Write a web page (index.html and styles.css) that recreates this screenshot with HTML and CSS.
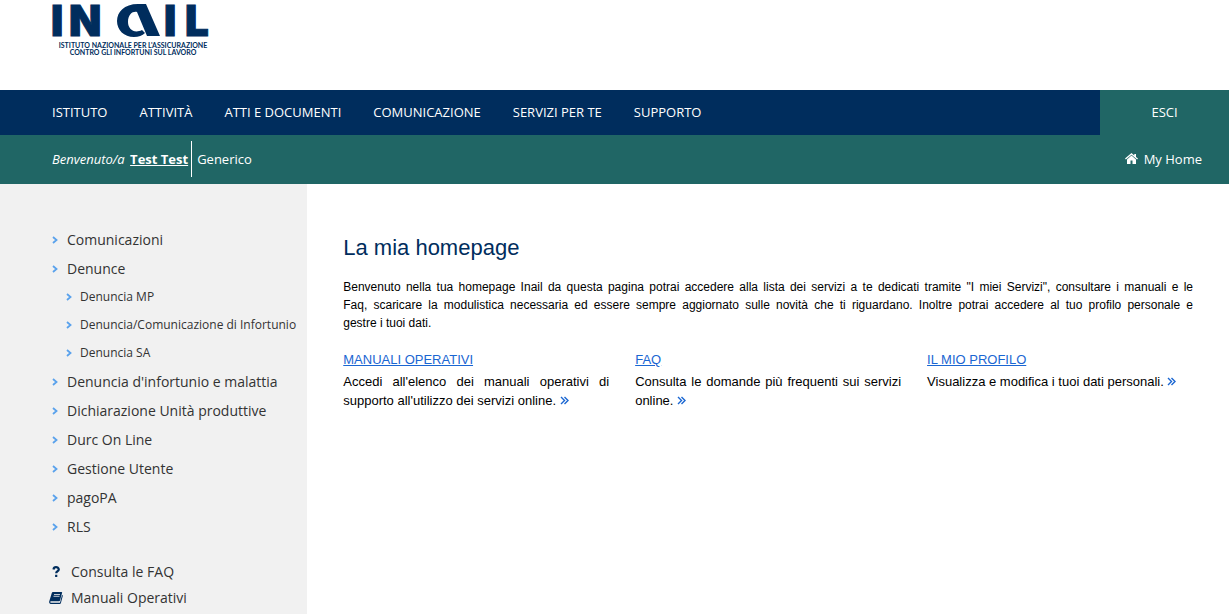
FILE: index.html
```
<!DOCTYPE html>
<html lang="it">
<head>
<meta charset="utf-8">
<meta name="viewport" content="width=device-width, initial-scale=1">
<title>INAIL - La mia homepage</title>
<link rel="stylesheet" href="styles.css">
</head>
<body>
<svg class="sprite" aria-hidden="true">
  <symbol id="chevron" viewBox="0 0 6 8"><path d="M1 1l3.5 3L1 7" fill="none" stroke="currentColor" stroke-width="1.8"/></symbol>
  <symbol id="double" viewBox="0 0 9 9"><path d="M1 1l3.5 3.5L1 8M4.500 1L8 4.500 4.500 8" fill="none" stroke="currentColor" stroke-width="1.400"/></symbol>
</svg>
<header>
  <div class="brand">
    <a href="#" aria-label="INAIL">
      <svg class="logo" width="162" height="54" viewBox="0 0 162 54" fill="#002d5d">
        <g class="logo-name">
          <text x="-1" y="32">I</text>
          <text x="17" y="32">N</text>
          <text x="112" y="32">I</text>
          <text x="133" y="32">L</text>
        </g>
        <path d="M86 0C72 0 65 8 65 17s7 16 17 16q7 0 11-4l-3-3c-8 4-14-1-14-8 0-8 5-11 9-10l10 24h13L94 0z"/>
        <g class="logo-sub" text-anchor="middle">
          <text x="81" y="44">ISTITUTO NAZIONALE PER L'ASSICURAZIONE</text>
          <text x="81" y="51">CONTRO GLI INFORTUNI SUL LAVORO</text>
        </g>
      </svg>
    </a>
  </div>
  <nav class="mainnav">
    <ul>
      <li><a href="#">ISTITUTO</a></li>
      <li><a href="#">ATTIVITÀ</a></li>
      <li><a href="#">ATTI E DOCUMENTI</a></li>
      <li><a href="#">COMUNICAZIONE</a></li>
      <li><a href="#">SERVIZI PER TE</a></li>
      <li><a href="#">SUPPORTO</a></li>
    </ul>
    <a class="exit" href="#">ESCI</a>
  </nav>
  <div class="userbar">
    <p class="welcome"><em>Benvenuto/a</em> <a href="#">Test Test</a></p>
    <span class="role">Generico</span>
    <a class="home" href="#"><svg width="13" height="11" viewBox="0 0 13 11" fill="currentColor" aria-hidden="true"><path d="M6.500 0L0 5.600l.9 1 5.600-4.800 5.600 4.800.9-1L11 3.900V1H9.300v1.400zM6.500 2.600L2 6.500V11h3.500V7.500h2V11H11V6.500z"/></svg>My Home</a>
  </div>
</header>
<div class="page">
  <aside>
    <ul class="menu">
      <li><a href="#"><svg><use href="#chevron"/></svg>Comunicazioni</a></li>
      <li><a href="#"><svg><use href="#chevron"/></svg>Denunce</a>
        <ul class="submenu">
          <li><a href="#"><svg><use href="#chevron"/></svg>Denuncia MP</a></li>
          <li><a href="#"><svg><use href="#chevron"/></svg>Denuncia/Comunicazione di Infortunio</a></li>
          <li><a href="#"><svg><use href="#chevron"/></svg>Denuncia SA</a></li>
        </ul>
      </li>
      <li><a href="#"><svg><use href="#chevron"/></svg>Denuncia d'infortunio e malattia</a></li>
      <li><a href="#"><svg><use href="#chevron"/></svg>Dichiarazione Unità produttive</a></li>
      <li><a href="#"><svg><use href="#chevron"/></svg>Durc On Line</a></li>
      <li><a href="#"><svg><use href="#chevron"/></svg>Gestione Utente</a></li>
      <li><a href="#"><svg><use href="#chevron"/></svg>pagoPA</a></li>
      <li><a href="#"><svg><use href="#chevron"/></svg>RLS</a></li>
    </ul>
    <ul class="help">
      <li><a href="#"><svg viewBox="0 0 14 12" aria-hidden="true"><path d="M4.500 3.500Q4.800 1.200 7 1.200T9.800 3.300Q9.800 4.600 8.500 5.300 7.200 6 7.200 7.200M7.200 8.800v2.300" fill="none" stroke="currentColor" stroke-width="2.200"/></svg>Consulta le FAQ</a></li>
      <li><a href="#"><svg viewBox="0 0 14 12" aria-hidden="true"><path fill="currentColor" d="M4 0h8.500q.8 0 .6.800L11 8.500q-.2.800-1 .8H2q-.8 0-.8.700t.8.700h9L13 3l.9.500-2 7.500q-.3.900-1.200.9H1.500Q-.2 11.500.2 9.500L2.800 1Q3 0 4 0z"/><path d="M5 2.500h6M4.500 4.300h6" stroke="#f1f1f1" stroke-width=".8"/></svg>Manuali Operativi</a></li>
    </ul>
  </aside>
  <main>
    <h1>La mia homepage</h1>
    <p class="intro">Benvenuto nella tua homepage Inail da questa pagina potrai accedere alla lista dei servizi a te dedicati tramite "I miei Servizi", consultare i manuali e le Faq,&nbsp;scaricare la modulistica necessaria ed essere sempre aggiornato sulle novità che ti riguardano. Inoltre potrai accedere al tuo profilo personale e gestre&nbsp;i&nbsp;tuoi&nbsp;dati.</p>
    <div class="cards">
      <section><h2><a href="#">MANUALI OPERATIVI</a></h2>
        <p>Accedi all'elenco dei manuali operativi di supporto all'utilizzo dei servizi online. <a href="#" aria-label="Vai ai manuali"><svg><use href="#double"/></svg></a></p></section>
      <section><h2><a href="#">FAQ</a></h2>
        <p>Consulta le domande più frequenti sui servizi online. <a href="#" aria-label="Vai alle FAQ"><svg><use href="#double"/></svg></a></p></section>
      <section><h2><a href="#">IL MIO PROFILO</a></h2>
        <p>Visualizza e modifica i tuoi dati personali. <a href="#" aria-label="Vai al profilo"><svg><use href="#double"/></svg></a></p></section>
    </div>
  </main>
</div>
</body>
</html>
```
FILE: styles.css
```
* { box-sizing: border-box; }
body {
  margin: 0;
  min-height: 100vh;
  display: flex;
  flex-direction: column;
  background: #fff;
  color: #000;
  font: 13px/18px "Liberation Sans", Arial, sans-serif;
}
ul, p, h1, h2 { margin: 0; padding: 0; }
ul { list-style: none; }
a { color: inherit; text-decoration: none; }
.sprite { display: none; }
header, aside { font-family: "Open Sans", sans-serif; }

.brand { height: 90px; padding: 4px 52px; }
.logo { display: block; overflow: visible; }
.logo-name { font: 900 42px Inter, sans-serif; stroke: #002d5d; stroke-width: 1px; }
.logo-sub { font: 700 7px Lato, sans-serif; }

.mainnav { display: flex; background: #002d5d; color: #fff; line-height: 45px; }
.mainnav ul { flex: 1; display: flex; gap: 32px; padding-left: 52px; }
.exit { width: 129px; text-align: center; background: #206665; }

.userbar {
  display: flex;
  align-items: center;
  height: 49px;
  padding: 0 27px 2px 52px;
  background: #206665;
  color: #fff;
}
.welcome { padding-right: 3px; border-right: 1px solid #fff; line-height: 36px; }
.welcome a { margin-left: 2px; font-weight: 700; text-decoration: underline; }
.role { padding-left: 5px; }
.home { display: flex; align-items: center; gap: 6px; margin-left: auto; }

.page { flex: 1; display: flex; }
aside { width: 25%; padding: 41px 0 0 52px; background: #f1f1f1; color: #333; white-space: nowrap; }
.menu svg { width: 6px; height: 8px; color: #5aa2ec; }
.menu a { display: flex; align-items: center; gap: 9px; font-size: 14px; line-height: 29px; }
.menu .submenu { padding-left: 14px; }
.menu .submenu a { gap: 8px; font-size: 12px; line-height: 28px; }
.help { padding-top: 18px; }
.help a { display: flex; align-items: center; gap: 8px; margin-left: -3px; font-size: 14px; line-height: 26px; }
.help svg { width: 14px; height: 12px; color: #002d5d; }

main { flex: 1; padding: 50px 36px 0; }
h1 { color: #002d5d; font-size: 22px; line-height: 28px; font-weight: 400; }
.intro { margin-top: 16px; font-size: 12px; text-align: justify; }
.cards { display: grid; grid-template-columns: repeat(3, 1fr); gap: 26px; margin-top: 18px; }
h2 { font-size: 13px; line-height: 20px; font-weight: 400; }
h2 a { color: #1a66d2; text-decoration: underline; }
section p { line-height: 19px; margin-top: 2px; text-align: justify; }
section p a { color: #1a66d2; }
section svg { width: 9px; height: 9px; }
```
